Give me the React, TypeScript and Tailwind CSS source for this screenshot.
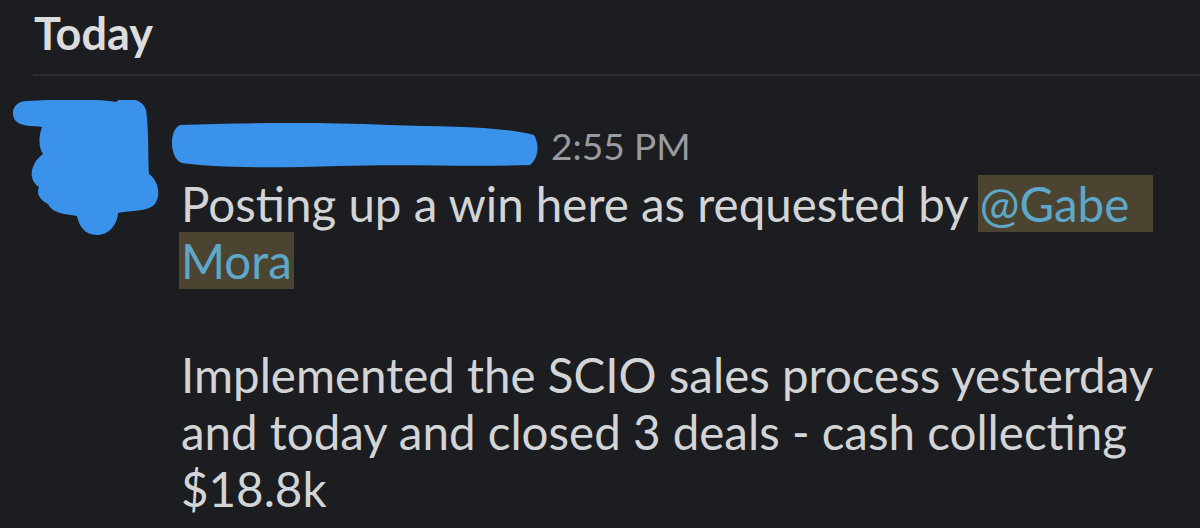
export default function App() {
  return (
    <div className="w-[1200px] h-[528px] overflow-hidden bg-[#1c1d21] font-['Lato','Noto_Sans',sans-serif] text-[#d3d4d6]">
      <div className="pl-[34px] pt-[6px] h-[74px]">
        <h1 className="text-[45px] font-bold leading-[54px] text-[#dcdcde]">Today</h1>
      </div>
      <div className="ml-[33px] h-[2px] bg-[#2b2c30]" />

      <div className="flex pt-[48px]">
        {/* avatar, scribbled over */}
        <div className="w-[181px] shrink-0 -mt-[24px]">
          <svg width="181" height="140" viewBox="0 100 181 140">
            <path
              d="M26 101 C60 99 100 99 116 102 C121 96 142 97 146 110 C149 130 148 160 149 174 C158 180 162 196 154 205 C146 212 132 210 118 213 C117 226 108 235 97 235 C85 235 79 226 77 216 C64 214 52 213 48 204 C40 200 36 194 39 187 C31 182 30 172 34 165 C37 158 41 156 43 154 C39 148 38 138 42 127 C36 126 20 127 15 120 C10 112 14 102 26 101 Z"
              fill="#3b92ea"
            />
          </svg>
        </div>

        <div className="flex flex-col">
          <div className="flex items-center h-[44px] -ml-[13px]">
            <svg width="372" height="46" viewBox="0 0 372 46">
              <path
                d="M12 2 C70 0 150 -1 220 2 C280 4 330 3 366 12 C372 22 370 36 362 42 C300 44 240 41 170 43 C110 45 50 45 14 40 C2 36 0 8 12 2 Z"
                fill="#3b92ea"
              />
            </svg>
            <span className="ml-[11px] text-[37px] leading-[44px] text-[#9a9b9f]">2:55 PM</span>
          </div>

          <div className="text-[47.5px] leading-[57px] mt-[7px]">
            <p>
              Posting up a win here as requested by{' '}
              <span className="bg-[#4b4430] text-[#5fa7ca] pl-[2px] pr-[24px] -ml-[2px]">@Gabe</span>
              <br />
              <span className="bg-[#4b4430] text-[#5fa7ca] pl-[2px] pr-[2px] -ml-[2px]">Mora</span>
            </p>
            <p className="mt-[57px]">
              Implemented the SCIO sales process yesterday
              <br />
              and today and closed 3 deals - cash collecting
              <br />
              $18.8k
            </p>
          </div>
        </div>
      </div>
    </div>
  );
}
